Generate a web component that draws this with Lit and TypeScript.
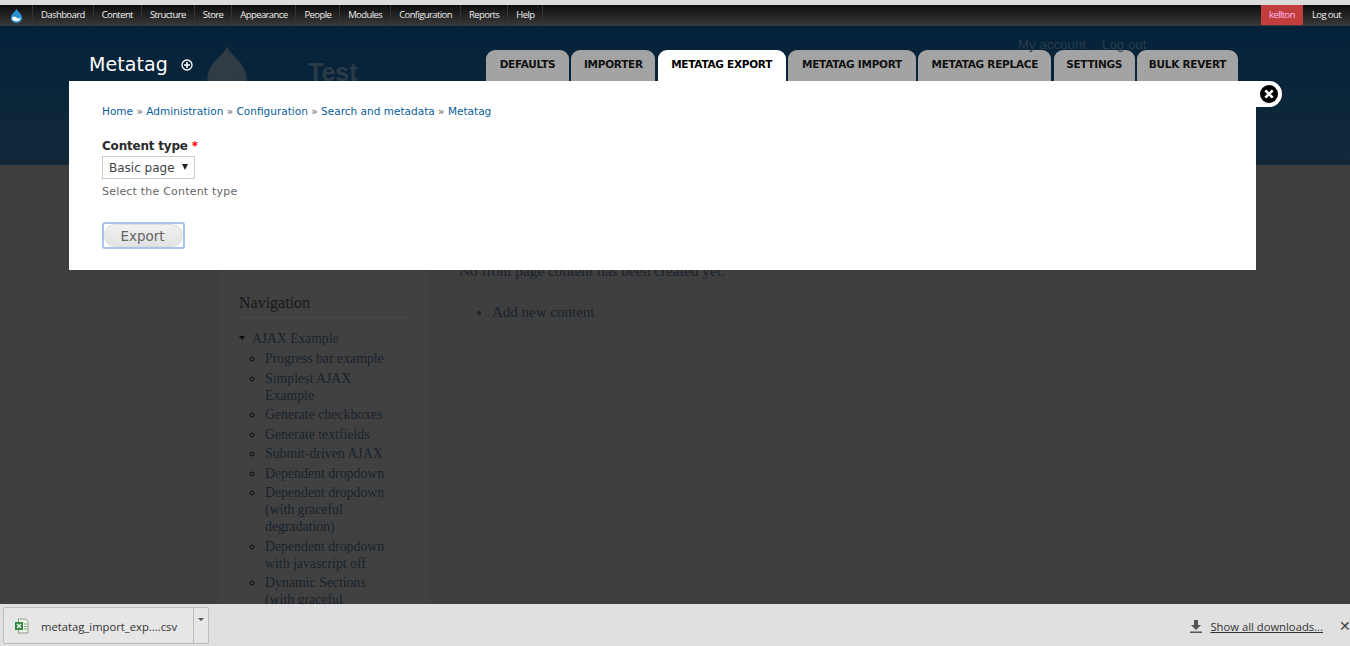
import { LitElement, css, html, svg } from 'lit';
import { customElement } from 'lit/decorators.js';

const MENU = ['Dashboard', 'Content', 'Structure', 'Store', 'Appearance', 'People', 'Modules', 'Configuration', 'Reports', 'Help'];
const TABS = [
  { label: 'DEFAULTS', width: 83 },
  { label: 'IMPORTER', width: 84 },
  { label: 'METATAG EXPORT', width: 128, active: true },
  { label: 'METATAG IMPORT', width: 128 },
  { label: 'METATAG REPLACE', width: 133 },
  { label: 'SETTINGS', width: 81 },
  { label: 'BULK REVERT', width: 101 },
];
const CRUMBS = ['Home', 'Administration', 'Configuration', 'Search and metadata', 'Metatag'];
const NAV = [
  'Progress bar example',
  'Simplest AJAX Example',
  'Generate checkboxes',
  'Generate textfields',
  'Submit-driven AJAX',
  'Dependent dropdown',
  'Dependent dropdown (with graceful degradation)',
  'Dependent dropdown with javascript off',
  'Dynamic Sections (with graceful degradation)',
];

const drop = (body: string, face: string) => svg`
  <path d="M12 1c1 4 8 7 9 14 .6 5-4 8.500-9 8.500S2.400 20 3 15C4 8 11 5 12 1z" fill=${body} />
  <path d="M5 15c2-3 5-2 7 0s5 2 6-1c1 4-2 7-6 7s-8-2-7-6z" fill=${face} />`;

@customElement('app-root')
export class AppRoot extends LitElement {
  static styles = css`
    :host {
      display: block;
    }

    * {
      box-sizing: border-box;
    }

    .page {
      display: flex;
      flex-direction: column;
      height: 646px;
      overflow: hidden;
      background: #3f3f3f;
      border-top: 5px solid #dcdcdc;
    }

    .toolbar {
      flex: none;
      display: flex;
      align-items: stretch;
      height: 21px;
      padding-right: 9px;
      background: linear-gradient(#0d0d0d, #3a3a3a);
      font: 9.500px/19px 'Open Sans', sans-serif;
      letter-spacing: -0.6px;
      color: #eee;
    }

    .home {
      width: 33px;
      display: flex;
      align-items: center;
      padding-left: 9px;
      border-right: 1px solid #333;
    }

    .menu-item {
      padding: 0 8px;
      border-right: 1px solid #333;
    }

    .spacer {
      flex: 1;
    }

    .user {
      width: 42px;
      height: 20px;
      text-align: center;
      background: #c23d3d;
      color: #fbe;
    }

    .logout {
      margin-left: 9px;
    }

    .main {
      flex: 1;
      min-height: 0;
      position: relative;
      overflow: hidden;
    }

    .header {
      height: 139px;
      display: flex;
      background: linear-gradient(#03223a, #13293a);
      padding-left: 89px;
    }

    .title {
      width: 112px;
      padding-top: 25px;
      font: 19px/26px 'DejaVu Sans', sans-serif;
      letter-spacing: 0.1px;
      color: #fff;
      display: flex;
      gap: 13px;
    }

    .title svg {
      margin-top: 8px;
    }

    .logo {
      width: 107px;
      padding-top: 17px;
    }

    .site {
      width: 178px;
      padding-top: 31px;
      font: bold 25px/30px 'Liberation Sans', sans-serif;
      color: #2b3b48;
    }

    .tabs {
      display: flex;
      gap: 2.330px;
      height: 31px;
      margin-top: 24px;
    }

    .tab {
      border-radius: 9px 9px 0 0;
      background: #a3a3a3;
      font: bold 10.500px/28px 'DejaVu Sans', sans-serif;
      letter-spacing: -0.27px;
      text-align: center;
      color: #111;
      white-space: nowrap;
    }

    .tab.active {
      background: #fff;
      color: #000;
    }

    .secondary {
      position: absolute;
      left: 1018px;
      top: 11px;
      display: flex;
      gap: 16px;
      font: 13.300px/16px 'Liberation Sans', sans-serif;
      color: #2b3b48;
    }

    .below {
      display: flex;
      font-family: 'Liberation Serif', serif;
      color: #18232e;
    }

    .sidebar {
      width: 209px;
      margin-left: 219px;
      padding: 128px 20px 0;
      background: #414141;
    }

    .sidebar h2 {
      margin: 0 0 12px;
      padding-bottom: 4px;
      border-bottom: 1px solid #4a4a4a;
      font: 16px/20px 'Liberation Serif', serif;
      font-weight: normal;
      color: #181818;
    }

    .parent {
      font-size: 13.600px;
      line-height: 17px;
      padding-left: 13px;
      position: relative;
    }

    .parent::before {
      content: '';
      position: absolute;
      left: 0;
      top: 6px;
      border: 3.500px solid transparent;
      border-top: 4px solid #0c0c0c;
    }

    .nav {
      list-style: circle;
      margin: 3px 0 0;
      padding: 0 14px 0 26px;
      font-size: 13.800px;
      line-height: 17px;
    }

    .nav li {
      padding: 0 0 2.500px;
      color: #0c0c0c;
    }

    .nav span {
      color: #18232e;
    }

    .content {
      padding: 96px 0 0 31px;
      font-size: 15.350px;
      line-height: 20px;
    }

    .content ul {
      margin: 21px 0 0;
      padding-left: 33px;
      font-size: 15px;
    }

    .modal {
      position: absolute;
      left: 69px;
      top: 55px;
      width: 1187px;
      height: 189px;
      padding: 22px 33px;
      background: #fff;
      font-family: 'DejaVu Sans', sans-serif;
    }

    .close {
      position: absolute;
      left: 1187px;
      top: 0;
      width: 26px;
      height: 26px;
      padding: 3px 0 0 3px;
      background: #fff;
      border-radius: 0 13px 13px 0;
    }

    .crumbs {
      font-size: 10.540px;
      line-height: 16px;
      color: #666;
    }

    .crumbs a {
      color: #0b6099;
    }

    .field-label {
      margin-top: 19px;
      font-size: 12px;
      line-height: 17px;
      letter-spacing: -0.2px;
      font-weight: bold;
      color: #2a2a2a;
    }

    .field-label span {
      color: #e00;
    }

    .select {
      width: 93px;
      height: 23px;
      margin-top: 1px;
      padding: 0 6px;
      display: flex;
      align-items: center;
      justify-content: space-between;
      border: 1px solid #ccc;
      font-size: 12px;
      color: #444;
    }

    .select i {
      border: 3.500px solid transparent;
      border-top: 6px solid #222;
      border-bottom: 0;
      margin-bottom: 2px;
    }

    .hint {
      margin-top: 5px;
      font-size: 11px;
      line-height: 16px;
      letter-spacing: 0.2px;
      color: #666;
    }

    .export {
      width: 83px;
      height: 27px;
      margin-top: 22px;
      border: 2px solid #a9c3ea;
      border-radius: 3px;
    }

    .export div {
      height: 100%;
      border-radius: 12px;
      background: linear-gradient(#f1f1f1, #e2e2e2);
      border: 1px solid #ddd;
      padding-right: 2px;
      text-align: center;
      font-size: 13.500px;
      line-height: 23px;
      color: #666;
    }

    .downloads {
      flex: none;
      height: 42px;
      display: flex;
      align-items: center;
      padding: 1px 0 0 3px;
      background: #e0e0e0;
      font: 11.250px/16px 'Open Sans', sans-serif;
      color: #333;
    }

    .chip {
      display: flex;
      width: 206px;
      height: 37px;
      border: 1px solid #bdbdbd;
      border-radius: 2px;
      background: #e6e6e6;
    }

    .file {
      width: 190px;
      display: flex;
      align-items: center;
      gap: 12px;
      padding-left: 10px;
      border-right: 1px solid #bdbdbd;
    }

    .file span {
      margin-top: 2px;
    }

    .caret {
      flex: 1;
      padding: 10px 0 0 4px;
    }

    .caret i {
      display: block;
      width: 0;
      border: 3px solid transparent;
      border-top: 3px solid #555;
      border-bottom: 0;
    }

    .all {
      margin-left: auto;
      display: flex;
      align-items: center;
      gap: 7px;
    }

    .all a {
      margin-top: 2px;
      text-decoration: underline;
    }

    .dismiss {
      margin: 0 -1px 0 16px;
      color: #444;
      font-size: 14px;
    }
  `;

  render() {
    return html`
      <div class="page">
        <div class="toolbar">
          <div class="home">
            <svg width="15" height="16" viewBox="0 0 24 25">${drop('#2b8fd0', '#fff')}</svg>
          </div>
          ${MENU.map((m) => html`<div class="menu-item">${m}</div>`)}
          <div class="spacer"></div>
          <div class="user">kellton</div>
          <div class="logout">Log out</div>
        </div>
        <div class="main">
          <div class="header">
            <div class="title">
              Metatag
              <svg width="12" height="12" viewBox="0 0 12 12">
                <circle cx="6" cy="6" r="5" fill="none" stroke="#fff" stroke-width="1.300" />
                <path d="M6 3v6M3 6h6" stroke="#fff" stroke-width="1.600" />
              </svg>
            </div>
            <div class="logo">
              <svg width="52" height="56" viewBox="0 0 24 25">${drop('#2f3b45', '#2f3b45')}</svg>
            </div>
            <div class="site">Test</div>
            <div class="tabs">
              ${TABS.map(
                (t) => html`<div class="tab ${t.active ? 'active' : ''}" style="width:${t.width}px">${t.label}</div>`
              )}
            </div>
            <div class="secondary"><span>My account</span><span>Log out</span></div>
          </div>
          <div class="below">
            <div class="sidebar">
              <h2>Navigation</h2>
              <div class="parent">AJAX Example</div>
              <ul class="nav">
                ${NAV.map((n) => html`<li><span>${n}</span></li>`)}
              </ul>
            </div>
            <div class="content">
              No front page content has been created yet.
              <ul><li>Add new content</li></ul>
            </div>
          </div>
          <div class="modal">
            <div class="close">
              <svg width="20" height="20" viewBox="0 0 20 20">
                <circle cx="10" cy="10" r="9" fill="#000" />
                <path d="M6.300 6.300l7.400 7.400M13.700 6.300l-7.400 7.400" stroke="#fff" stroke-width="2.600" />
              </svg>
            </div>
            <div class="crumbs">
              ${CRUMBS.map((c, i) => html`${i ? ' » ' : ''}<a>${c}</a>`)}
            </div>
            <div class="field-label">Content type <span>*</span></div>
            <div class="select">Basic page<i></i></div>
            <div class="hint">Select the Content type</div>
            <div class="export"><div>Export</div></div>
          </div>
        </div>
        <div class="downloads">
          <div class="chip">
            <div class="file">
              <svg width="15" height="16" viewBox="0 0 15 16">
                <path d="M4.500 1h7l2.500 2.500V15h-9.500z" fill="#f4f8f0" stroke="#8a9a80" />
                <rect x="1" y="4" width="8" height="8" fill="#2f8a3c" />
                <path d="M3 6l4 4M7 6l-4 4" stroke="#fff" stroke-width="1.200" />
                <path d="M10 6h3M10 8.500h3M10 11h3" stroke="#6aa86f" />
              </svg>
              <span>metatag_import_exp....csv</span>
            </div>
            <div class="caret"><i></i></div>
          </div>
          <div class="all">
            <svg width="14" height="14" viewBox="0 0 14 14">
              <path d="M5 1h4v5h3l-5 5-5-5h3zM1 12.500h12V14H1z" fill="#555" />
            </svg>
            <a>Show all downloads...</a>
          </div>
          <div class="dismiss">✕</div>
        </div>
      </div>
    `;
  }
}
